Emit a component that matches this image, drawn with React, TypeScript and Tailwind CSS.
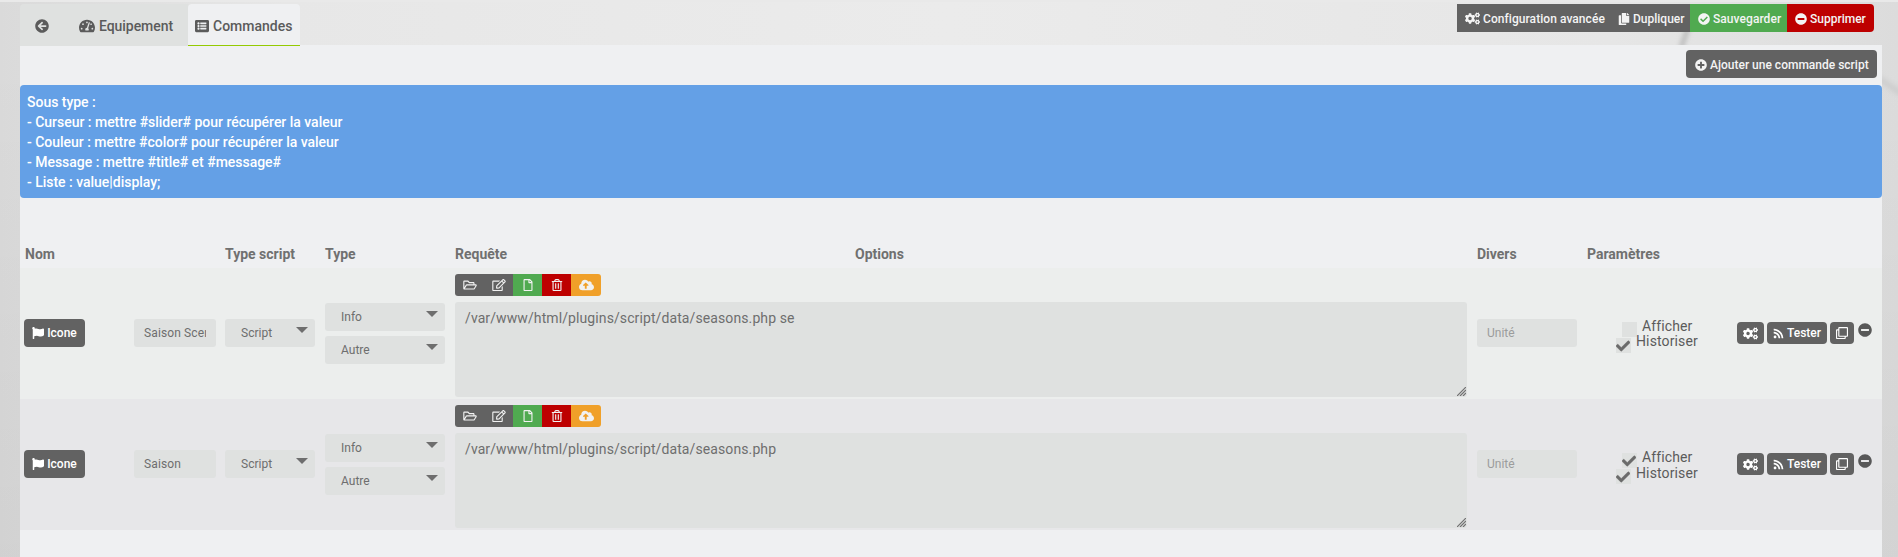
import React from "react";
import {
  FaArrowCircleLeft, FaTachometerAlt, FaListAlt, FaCogs, FaCopy, FaCheckCircle, FaMinusCircle, FaPlusCircle,
  FaFlag, FaRegFolderOpen, FaRegEdit, FaRegFile, FaRegTrashAlt, FaCloudUploadAlt, FaRss, FaRegClone, FaCheck,
} from "react-icons/fa";

function Select({ label, width }: { label: string; width: string }) {
  return (
    <div className={`${width} flex h-7 items-start justify-between rounded-[3px] bg-[#dfe1e0] pr-[7px] pl-4 text-[12px] leading-7 text-[#6e6e6e]`}>
      <span>{label}</span>
      <svg className="mt-2 h-[6px] w-[12px]" viewBox="0 0 12 6"><path d="M0 0h12L6 6z" fill="#6e6e6e" /></svg>
    </div>
  );
}

function Check({ on }: { on: boolean }) {
  return (
    <span className="flex size-[15px] items-end bg-[#dfe1e0]">
      {on && <FaCheck className="size-[14px] stroke-[#6b6b6b] stroke-[16px] text-[#6b6b6b]" />}
    </span>
  );
}

type Command = { name: string; request: string; visible: boolean; bg: string };

const commands: Command[] = [
  { name: "Saison Scenario", request: "/var/www/html/plugins/script/data/seasons.php se", visible: false, bg: "bg-[#eceeed]" },
  { name: "Saison", request: "/var/www/html/plugins/script/data/seasons.php", visible: true, bg: "bg-[#e7e7e9]" },
];

const columns = "grid grid-cols-[205px_100px_130px_400px_622px_110px_295px]";

function Row({ name, request, visible, bg }: Command) {
  return (
    <div className={`flex h-[131px] ${bg}`}>
      <div className="flex w-[205px] items-center pb-px pl-1">
        <button className="flex h-7 w-[61px] items-center justify-center gap-[3px] rounded-[4px] bg-[#626262] text-[12px] font-medium text-white">
          <FaFlag className="size-3" />Icone
        </button>
        <div className="ml-[49px] h-7 w-[82px] rounded-[3px] bg-[#dfe1e0] px-[10px] text-[12px] leading-7 tracking-[0.12px] text-[#6e6e6e]">
          <div className="overflow-hidden whitespace-nowrap">{name}</div>
        </div>
      </div>
      <div className="flex w-[100px] items-center pb-px"><Select label="Script" width="w-[90px]" /></div>
      <div className="flex w-[130px] flex-col justify-center gap-[5px]">
        <Select label="Info" width="w-[120px]" />
        <Select label="Autre" width="w-[120px]" />
      </div>
      <div className="flex w-[1022px] flex-col pt-[6px]">
        <div className="flex h-[22px] w-[146px] overflow-hidden rounded-[3px] text-[#f1f1f1]">
          <span className="flex w-[29px] items-center justify-center bg-[#626262]"><FaRegFolderOpen className="h-3 w-[14px]" /></span>
          <span className="flex w-[29px] items-center justify-center bg-[#626262]"><FaRegEdit className="h-3 w-[14px]" /></span>
          <span className="flex w-[29px] items-center justify-center bg-[#50aa50]"><FaRegFile className="h-3 w-3" /></span>
          <span className="flex w-[29px] items-center justify-center bg-[#bd0000]"><FaRegTrashAlt className="h-3 w-3" /></span>
          <span className="flex w-[30px] items-center justify-center bg-[#f0a029]"><FaCloudUploadAlt className="h-3 w-[15px]" /></span>
        </div>
        <div className="mt-[6px] flex h-[95px] w-[1012px] rounded-[3px] bg-[#dfe1e0] pl-[10px] text-[14px] leading-[32px] tracking-[0.1px] text-[#6e6e6e]">
          <span className="grow">{request}</span>
          <svg className="mr-[1px] mb-[1px] size-[9px] self-end" viewBox="0 0 9 9"><path d="M0 9L9 0M3 9L9 3M6 9L9 6" stroke="#707070" strokeWidth="1.2" /></svg>
        </div>
      </div>
      <div className="flex w-[110px] items-center pb-px">
        <div className="h-7 w-[100px] rounded-[3px] bg-[#dfe1e0] pl-[10px] text-[12px] leading-7 text-[#9b9c9c]">Unité</div>
      </div>
      <div className="flex w-[150px] flex-col pt-[50px] pl-[29px] text-[14px] leading-[16px] tracking-[0.12px] text-[#5b5b5b]">
        <div className="flex h-[15px] pl-[6px]"><div className="mt-[4px]"><Check on={visible} /></div><span className="ml-[5px]">Afficher</span></div>
        <div className="flex h-[20px]"><div className="mt-[5px]"><Check on /></div><span className={visible ? "ml-[5px] pt-px" : "ml-[5px]"}>Historiser</span></div>
      </div>
      <div className="flex items-start gap-[3px] pt-[54px] text-[12px] font-medium text-white">
        <span className="flex h-[22px] w-[27px] items-center justify-center rounded-[4px] bg-[#626262]"><FaCogs className="size-[15px]" /></span>
        <span className="flex h-[22px] w-[60px] items-center justify-center gap-[3px] rounded-[4px] bg-[#626262]"><FaRss className="size-[11px]" />Tester</span>
        <span className="flex h-[22px] w-[24px] items-center justify-center rounded-[4px] bg-[#626262]"><FaRegClone className="size-3" /></span>
        <FaMinusCircle className="mt-[1px] ml-[1px] size-[14px] text-[#585858]" />
      </div>
    </div>
  );
}

function Backdrop() {
  return (
    <svg className="absolute inset-0 h-full w-full" viewBox="0 0 1898 557" preserveAspectRatio="none">
      <defs>
        <linearGradient id="across">
          <stop offset="0" stopColor="#dadada" />
          <stop offset="0.15" stopColor="#e7e7e7" />
          <stop offset="0.5" stopColor="#ebebeb" />
          <stop offset="0.85" stopColor="#e6e6e6" />
          <stop offset="1" stopColor="#dcdcdc" />
        </linearGradient>
        <linearGradient id="down" x1="0" y1="0" x2="0" y2="1">
          <stop offset="0.1" stopColor="#000" stopOpacity="0" />
          <stop offset="1" stopColor="#000" stopOpacity="0.04" />
        </linearGradient>
        <filter id="soft" x="-100%" y="-100%" width="300%" height="300%"><feGaussianBlur stdDeviation="2.5" /></filter>
      </defs>
      <rect width="1898" height="557" fill="url(#across)" />
      <rect width="1898" height="557" fill="url(#down)" />
      <path d="M1688 28L1681 48" stroke="#b4b4b4" strokeWidth="4" filter="url(#soft)" />
      <path d="M1878 78L1902 94" stroke="#cdcdcd" strokeWidth="6" filter="url(#soft)" />
      <rect width="1898" height="2" fill="#e9e9e9" />
    </svg>
  );
}

export default function App() {
  return (
    <div className="relative h-[557px] overflow-hidden bg-[#e2e2e2] font-['Roboto',sans-serif]">
      <Backdrop />
      <div className="relative pt-[2px] pr-[16px] pl-[20px]">
        <header className="flex h-[43px] justify-between pt-[2px]">
          <nav className="flex h-[42px] text-[14px] font-medium text-[#5b5b5b]">
            <div className="flex w-[44px] items-center justify-center rounded-tl-[4px] bg-[#dfe1e0] pt-px"><FaArrowCircleLeft className="size-[14px]" /></div>
            <div className="flex w-[124px] items-center gap-1 bg-[#dfe1e0] pt-[2px] pl-[15px] tracking-[-0.05px]"><FaTachometerAlt className="size-4" />Equipement</div>
            <div className="flex w-[112px] items-center gap-1 rounded-t-[4px] border-b border-[#94ca02] bg-[#eff0f2] pt-[3px] pl-[7px]"><FaListAlt className="size-[14px]" />Commandes</div>
          </nav>
          <div className="mr-[8px] flex h-7 overflow-hidden rounded-r-[4px] text-[12px] font-medium text-[#f4f4f4]">
            <span className="flex w-[153px] items-center gap-[3px] bg-[#626262] pt-px pl-2 tracking-[0.06px]"><FaCogs className="size-[15px]" />Configuration avancée</span>
            <span className="flex w-[80px] items-center gap-[3px] bg-[#626262] pt-px pl-[8px]"><FaCopy className="size-3" />Dupliquer</span>
            <span className="flex w-[97px] items-center gap-[3px] bg-[#50aa50] pt-px pl-2 tracking-[0.06px]"><FaCheckCircle className="size-3" />Sauvegarder</span>
            <span className="flex w-[87px] items-center gap-[3px] bg-[#bd0000] pt-px pl-2"><FaMinusCircle className="size-3" />Supprimer</span>
          </div>
        </header>
        <main className="h-[512px] w-[1862px] bg-[#eff0f2]">
          <div className="flex h-[40px] justify-end pt-[5px] pr-[5px]">
            <button className="flex h-7 w-[191px] items-center gap-[3px] rounded-[4px] bg-[#626262] pt-px pl-[9px] text-[12px] font-medium text-[#f4f4f4]"><FaPlusCircle className="size-3" />Ajouter une commande script</button>
          </div>
          <div className="h-[113px] rounded-[4px] bg-[#64a0e6] px-[7px] py-[7px] text-[14px] leading-[20px] font-medium tracking-[-0.02px] text-white">
            <p>Sous type :</p>
            <p>- Curseur : mettre #slider# pour récupérer la valeur</p>
            <p>- Couleur : mettre #color# pour récupérer la valeur</p>
            <p>- Message : mettre #title# et #message#</p>
            <p>- Liste : value|display;</p>
          </div>
          <div className={`${columns} h-[70px] pt-[46px] text-[14px] leading-[20px] font-bold text-[#707070]`}>
            <span className="pl-[5px]">Nom</span><span>Type script</span><span>Type</span><span>Requête</span><span>Options</span><span>Divers</span><span>Paramètres</span>
          </div>
          {commands.map((c) => <Row key={c.name} {...c} />)}
        </main>
      </div>
    </div>
  );
}
